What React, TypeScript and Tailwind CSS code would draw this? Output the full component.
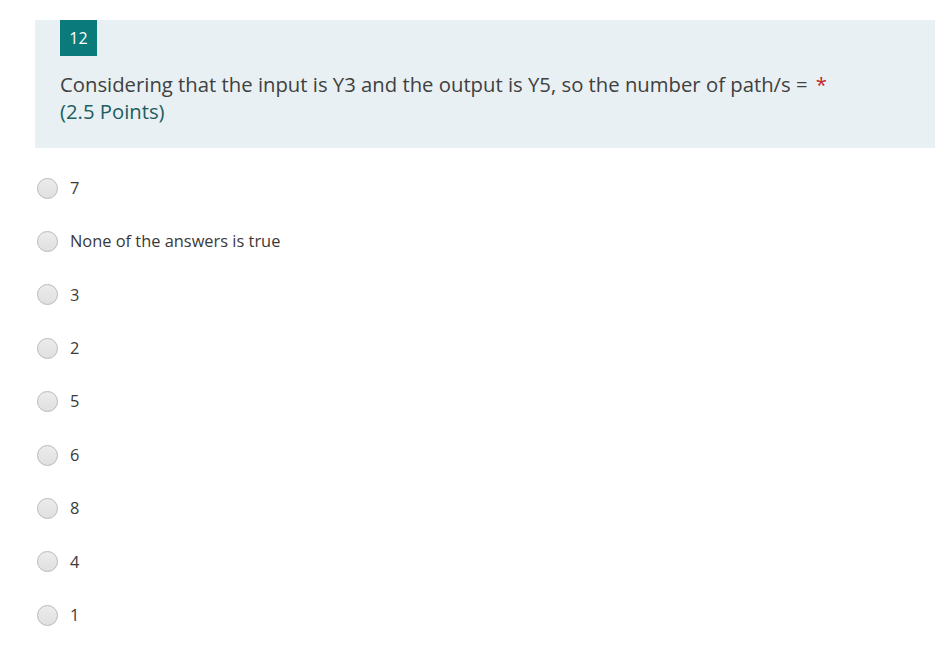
import React from "react";

const options = ["7", "None of the answers is true", "3", "2", "5", "6", "8", "4", "1"];

function Radio() {
  return (
    <span className="inline-block h-[21px] w-[21px] shrink-0 rounded-full border border-[#b8b8b8] bg-gradient-to-b from-[#ececec] to-[#e0e0e0]" />
  );
}

export default function App() {
  return (
    <div className="min-h-[646px] w-[935px] bg-white pt-5 font-['Open_Sans',sans-serif] text-[#333]">
      <div className="ml-[35px] h-[128px] bg-[#e8f0f3] pl-[25px]">
        <div className="flex h-[36px] w-[37px] items-center justify-center bg-[#0b7a7a] text-[16px] text-white">
          12
        </div>
        <div className="mt-[15px] text-[20.3px] leading-[27px] text-[#404040]">
          Considering that the input is Y3 and the output is Y5, so the number of path/s ={" "}
          <span className="ml-[3px] text-[#c4262e]">*</span>
          <div className="text-[#1d5d5f]">(2.5 Points)</div>
        </div>
      </div>
      <div className="ml-[37px] mt-[13.5px] flex flex-col">
        {options.map((opt, i) => (
          <label key={i} className="flex h-[53.375px] items-center gap-[12px] text-[16.4px] text-[#3a3a3a]">
            <Radio />
            <span>{opt}</span>
          </label>
        ))}
      </div>
    </div>
  );
}
